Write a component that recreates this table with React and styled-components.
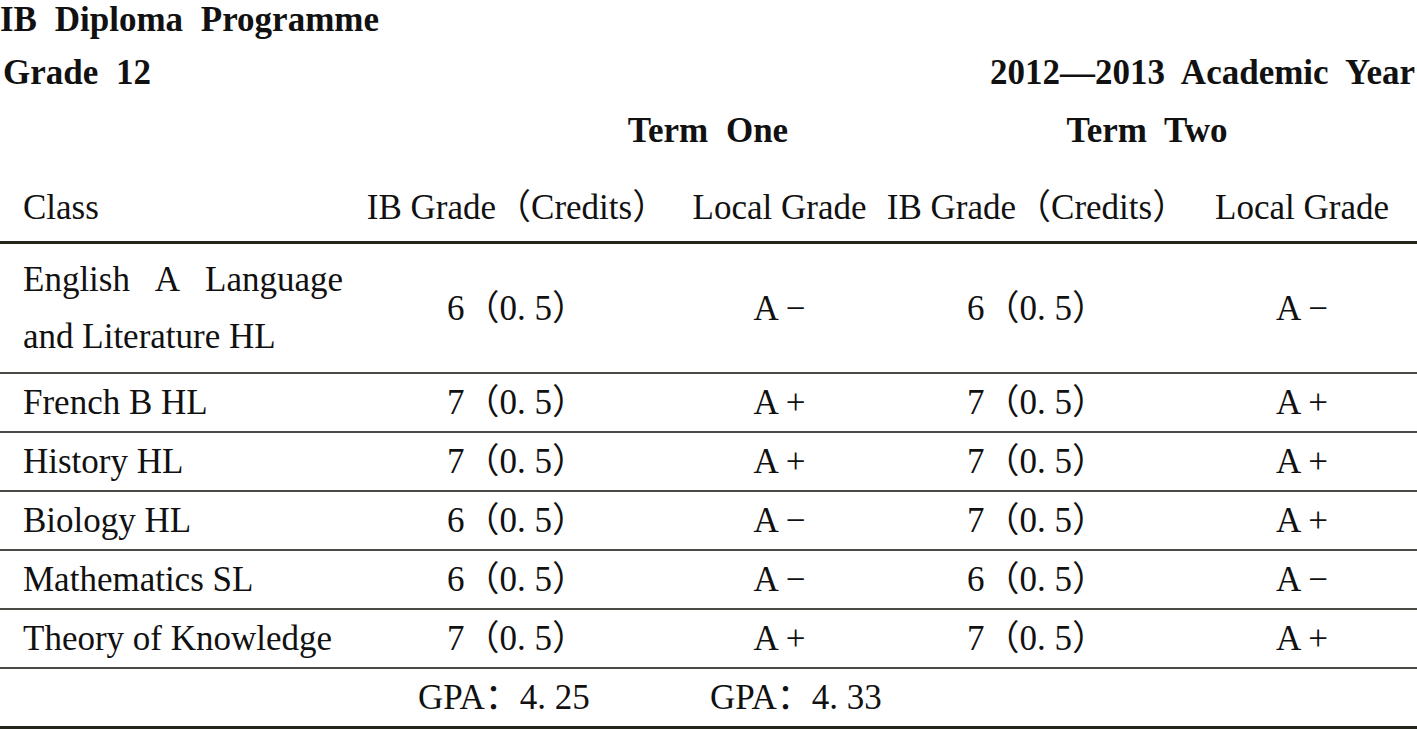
import React from 'react';
import styled, { createGlobalStyle } from 'styled-components';

const GlobalStyle = createGlobalStyle`
  html, body {
    margin: 0;
    padding: 0;
    background: #fff;
  }
  body {
    font-family: "Liberation Serif", "Noto Sans CJK SC", serif;
    color: #111;
  }
`;

const COLS = '362px 310px 215px 300px 230px';

const Page = styled.div`
  width: 1417px;
  font-family: "Liberation Serif", "Noto Sans CJK SC", serif;
  font-size: 35px;
`;

// Encabezados en negrita
const Heading = styled.div`
  font-weight: bold;
  word-spacing: 9px;
  white-space: nowrap;
`;

const Title = styled(Heading)`
  line-height: 39px;
  margin-bottom: 5px;
`;

const MetaRow = styled(Heading)`
  display: flex;
  justify-content: space-between;
  height: 57px;
  line-height: 57px;
  padding: 0 2px 0 3px;
`;

const TermRow = styled(Heading)`
  display: grid;
  grid-template-columns: 530px 356px 522px 1fr;
  height: 60px;
  line-height: 60px;
`;

const TermCell = styled.div`
  text-align: center;
`;

// Filas de la tabla
const Row = styled.div`
  display: grid;
  grid-template-columns: ${COLS};
  height: ${(p) => p.$height || 57}px;
  border-bottom: ${(p) => (p.$thick ? '3px solid #25241a' : '2px solid #4a4a46')};
  line-height: 57px;
`;

const HeadRow = styled(Row)`
  height: 80px;
  align-items: end;
`;

const Cell = styled.div`
  display: flex;
  align-items: center;
  justify-content: ${(p) => (p.$left ? 'flex-start' : 'center')};
  padding: ${(p) => (p.$left ? '0 19px 0 23px' : '0')};
  padding-left: ${(p) => (p.$indent ? `${p.$indent}px` : undefined)};
  white-space: ${(p) => (p.$wrap ? 'normal' : 'nowrap')};
`;

const HeadCell = styled(Cell)`
  height: 57px;
  margin-bottom: 5px;
`;

const ClassName = styled.span`
  display: block;
  width: 100%;
  text-align: justify;
`;

const rows = [
  { name: 'English A Language and Literature HL', t1: ['6（0. 5）', 'A −'], t2: ['6（0. 5）', 'A −'], tall: true },
  { name: 'French B HL', t1: ['7（0. 5）', 'A +'], t2: ['7（0. 5）', 'A +'] },
  { name: 'History HL', t1: ['7（0. 5）', 'A +'], t2: ['7（0. 5）', 'A +'] },
  { name: 'Biology HL', t1: ['6（0. 5）', 'A −'], t2: ['7（0. 5）', 'A +'] },
  { name: 'Mathematics SL', t1: ['6（0. 5）', 'A −'], t2: ['6（0. 5）', 'A −'] },
  { name: 'Theory of Knowledge', t1: ['7（0. 5）', 'A +'], t2: ['7（0. 5）', 'A +'] },
];

const App = () => (
  <Page>
    <GlobalStyle />
    <Title>IB Diploma Programme</Title>
    <MetaRow>
      <span>Grade 12</span>
      <span>2012—2013 Academic Year</span>
    </MetaRow>
    <TermRow>
      <div />
      <TermCell>Term One</TermCell>
      <TermCell>Term Two</TermCell>
    </TermRow>
    <HeadRow $thick>
      <HeadCell $left>Class</HeadCell>
      <HeadCell>IB Grade（Credits）</HeadCell>
      <HeadCell>Local Grade</HeadCell>
      <HeadCell>IB Grade（Credits）</HeadCell>
      <HeadCell>Local Grade</HeadCell>
    </HeadRow>
    {rows.map((r) => (
      <Row key={r.name} $height={r.tall ? 128 : 57}>
        <Cell $left $wrap>
          <ClassName>{r.name}</ClassName>
        </Cell>
        <Cell>{r.t1[0]}</Cell>
        <Cell>{r.t1[1]}</Cell>
        <Cell>{r.t2[0]}</Cell>
        <Cell>{r.t2[1]}</Cell>
      </Row>
    ))}
    <Row $thick>
      <Cell />
      <Cell $left $indent={56}>GPA：4. 25</Cell>
      <Cell $left $indent={38}>GPA：4. 33</Cell>
      <Cell />
      <Cell />
    </Row>
  </Page>
);

export default App;
